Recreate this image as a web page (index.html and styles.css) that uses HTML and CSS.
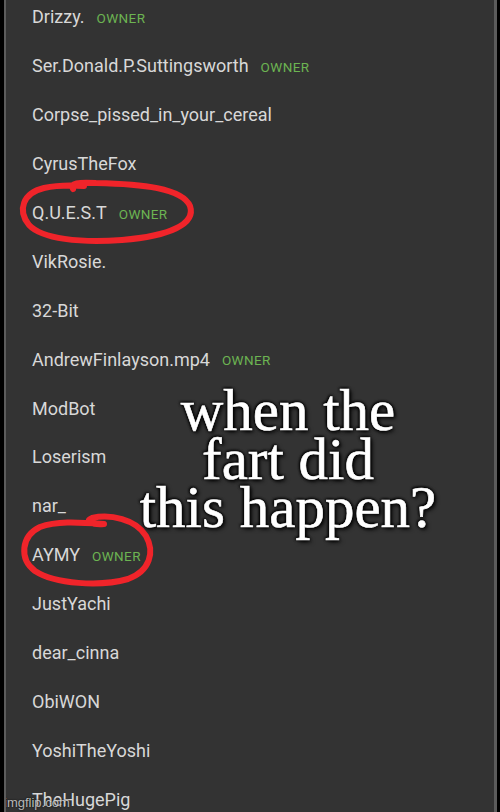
FILE: index.html
```html
<!DOCTYPE html>
<html>
<head>
<meta charset="utf-8">
<link rel="stylesheet" href="styles.css">
</head>
<body>
<div class="frame">
  <ul class="members">
    <li class="member"><span class="name">Drizzy.</span><span class="tag">OWNER</span></li>
    <li class="member"><span class="name">Ser.Donald.P.Suttingsworth</span><span class="tag">OWNER</span></li>
    <li class="member"><span class="name">Corpse_pissed_in_your_cereal</span></li>
    <li class="member"><span class="name">CyrusTheFox</span></li>
    <li class="member"><span class="name">Q.U.E.S.T</span><span class="tag">OWNER</span></li>
    <li class="member"><span class="name">VikRosie.</span></li>
    <li class="member"><span class="name">32-Bit</span></li>
    <li class="member"><span class="name">AndrewFinlayson.mp4</span><span class="tag">OWNER</span></li>
    <li class="member"><span class="name">ModBot</span></li>
    <li class="member"><span class="name">Loserism</span></li>
    <li class="member"><span class="name">nar_</span></li>
    <li class="member"><span class="name">AYMY</span><span class="tag">OWNER</span></li>
    <li class="member"><span class="name">JustYachi</span></li>
    <li class="member"><span class="name">dear_cinna</span></li>
    <li class="member"><span class="name">ObiWON</span></li>
    <li class="member"><span class="name">YoshiTheYoshi</span></li>
    <li class="member"><span class="name">TheHugePig</span></li>
  </ul>
  <svg class="scribbles" width="500" height="812" viewBox="0 0 500 812">
    <path d="M 73 189 C 70 183, 78 182, 96 183 C 142 184, 182 188, 190 206 C 196 224, 170 236, 122 240 C 80 243, 42 239, 29 225 C 17 210, 23 193, 44 188 C 58 185, 70 185, 84 186" />
    <path d="M 104 524 C 92 525, 84 521, 92 518 C 110 514, 136 519, 146 536 C 155 552, 150 571, 128 579 C 100 587, 55 584, 35 571 C 19 559, 21 536, 40 527 C 56 521, 76 522, 104 524" />
  </svg>
  <div class="caption">when the<br>fart did<br>this happen?</div>
  <div class="watermark">imgflip.com</div>
</div>
</body>
</html>
```
FILE: styles.css
```css
html, body {
  margin: 0;
  padding: 0;
  background: #000;
  width: 500px;
  height: 812px;
  overflow: hidden;
}
.frame {
  position: relative;
  margin: 0 3px 0 4px;
  height: 812px;
  background: #333333;
  border-left: 2px solid #5c5c5c;
  border-right: 3px solid #5c5c5c;
  overflow: hidden;
}
.members {
  list-style: none;
  margin: -7.5px 0 0 0;
  padding: 0 0 0 26px;
}
.member {
  height: 48.9px;
  display: flex;
  align-items: center;
  gap: 12px;
  font-family: Roboto, "Liberation Sans", sans-serif;
}
.name {
  font-size: 18px;
  color: #d8d8d8;
}
.tag {
  font-size: 13.5px;
  letter-spacing: 0.4px;
  color: #6cb452;
  margin-top: 2px;
}
.scribbles {
  position: absolute;
  left: -6px;
  top: 0;
  fill: none;
  stroke: #f0242a;
  stroke-width: 6;
  stroke-linecap: round;
  stroke-linejoin: round;
}
.caption {
  position: absolute;
  left: 82px;
  width: 400px;
  top: 386px;
  text-align: center;
  font-family: "Liberation Serif", serif;
  font-size: 59px;
  line-height: 48.5px;
  color: #fff;
  -webkit-text-stroke: 0.6px #fff;
  text-shadow: 0 0 3px #000, 0 0 3px #000, 2px 2px 4px #000, -1px -1px 3px #000;
}
.watermark {
  position: absolute;
  left: -2px;
  bottom: 2px;
  font-family: "Liberation Sans", sans-serif;
  font-size: 13px;
  color: rgba(255,255,255,0.7);
  text-shadow: 0 0 2px #000;
}
```
